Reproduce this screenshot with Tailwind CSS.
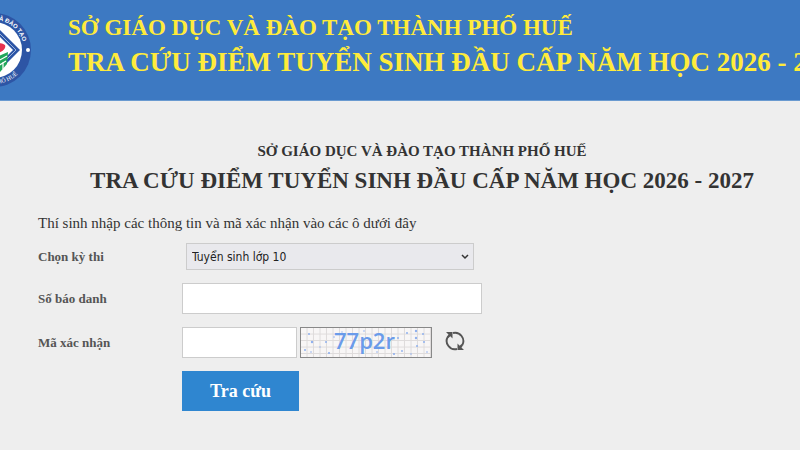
<!DOCTYPE html>
<html lang="vi">
<head>
<meta charset="utf-8">
<meta name="viewport" content="width=device-width, initial-scale=1">
<title>Tra cứu điểm tuyển sinh</title>
<script src="https://cdn.jsdelivr.net/npm/@tailwindcss/browser@4"></script>
</head>
<body class="min-h-screen overflow-x-hidden bg-[#eeeeee] font-['Liberation_Serif',serif] text-[#333333]">
<header class="flex items-center overflow-hidden border-b border-[#6a9ad0] bg-[#3d79c2] pb-3 pt-3">
  <svg class="-ml-[44px] h-[76px] w-[76px] shrink-0" viewBox="-38 -38 76 76" role="img" aria-label="Sở Giáo dục và Đào tạo Huế">
    <defs>
      <path id="top" d="M-30 0A30 30 0 0 1 30 0"/>
      <path id="bottom" d="M-34 0A34 34 0 0 0 34 0"/>
    </defs>
    <circle r="37" fill="#2d55a5"/>
    <circle r="28" fill="#fff"/>
    <path d="M0-26L26 0L0 26L-26 0Z" fill="#2d55a5"/>
    <path d="M0-22L22 0L0 22L-22 0Z" fill="none" stroke="#9db4dc" stroke-width="1"/>
    <path d="M0-19L19 0L0 19L-19 0Z" fill="#fff"/>
    <path d="M2 4Q-9-1-7-5Q-3-9 2-4Q6-9 11-5Q13 0 2 4Z" fill="#e8324f"/>
    <path d="M-12 5L-5 2L0 8L7 5L14 2L13 14L6 22L0 24L-11 14Z" fill="#20a65a"/>
    <path d="M4 11L13 6M4 16L12 11M9 12V19" stroke="#fff" stroke-width="1.2" fill="none"/>
    <circle cx="34" r="2" fill="#fff"/>
    <text font-family="Liberation Sans" font-size="6" font-weight="bold" fill="#fff" text-anchor="middle"><textPath href="#top" startOffset="54%">GIÁO DỤC VÀ ĐÀO TẠO</textPath></text>
    <text font-family="Liberation Serif" font-size="6" fill="#fff" text-anchor="middle"><textPath href="#bottom" startOffset="52%">THÀNH PHỐ HUẾ</textPath></text>
  </svg>
  <div class="ml-9 whitespace-nowrap pb-2 font-bold text-[#ffeb3b]">
    <p class="text-[23px] leading-8">SỞ GIÁO DỤC VÀ ĐÀO TẠO THÀNH PHỐ HUẾ</p>
    <p class="text-[27px] leading-9">TRA CỨU ĐIỂM TUYỂN SINH ĐẦU CẤP NĂM HỌC 2026 - 2027</p>
  </div>
</header>
<main class="px-[38px] pt-9">
  <div class="max-w-[768px] pl-11 text-center font-bold">
    <h2 class="text-[15px] leading-7">SỞ GIÁO DỤC VÀ ĐÀO TẠO THÀNH PHỐ HUẾ</h2>
    <h1 class="whitespace-nowrap text-[23px] leading-8">TRA CỨU ĐIỂM TUYỂN SINH ĐẦU CẤP NĂM HỌC 2026 - 2027</h1>
  </div>
  <p class="mt-4 text-[15px] leading-5">Thí sinh nhập các thông tin và mã xác nhận vào các ô dưới đây</p>
  <form class="mt-[10px] grid grid-cols-[144px_1fr] items-center gap-y-[13px] text-[13px]" onsubmit="return false">
    <label for="exam" class="font-bold text-[#555555]">Chọn kỳ thi</label>
    <div class="relative ml-1 w-72">
      <select id="exam" class="h-[27px] w-full appearance-none border border-[#cccccc] bg-[#e9e9ed] pl-[5px] font-['DejaVu_Sans_Condensed','DejaVu_Sans',sans-serif] text-xs text-[#222222]"><option>Tuyển sinh lớp 10</option></select>
      <svg class="pointer-events-none absolute right-[5px] top-[10px] h-2 w-2" viewBox="0 0 8 8" fill="none" stroke="#333" stroke-width="1.5"><path d="M1 2L4 5L7 2"/></svg>
    </div>
    <label for="number" class="font-bold text-[#555555]">Số báo danh</label>
    <input id="number" type="text" class="h-[31px] w-[300px] border border-[#cccccc] bg-white px-2">
    <label for="code" class="font-bold text-[#555555]">Mã xác nhận</label>
    <div class="flex items-center">
      <input id="code" type="text" class="h-[31px] w-[115px] border border-[#cccccc] bg-white px-2">
      <svg class="ml-[3px] h-[31px] w-[132px] border border-[#888888] bg-[#f8f6f6]" viewBox="0 0 130 29">
        <defs><pattern id="grid" width="6.5" height="6.5" patternUnits="userSpaceOnUse"><path d="M6 0V6.5M0 6H6.5" stroke="#dedbdb" stroke-width="1"/></pattern></defs>
        <rect width="130" height="29" fill="url(#grid)"/>
        <g fill="#8fb0ee">
          <circle cx="8" cy="6" r="1"/><circle cx="11" cy="14" r="1.2"/><circle cx="4" cy="22" r="1"/><circle cx="10" cy="24" r=".8"/><circle cx="19" cy="19" r=".7"/><circle cx="25" cy="14" r="1"/><circle cx="28" cy="25" r="1.1"/><circle cx="33" cy="9" r=".8"/><circle cx="41" cy="4" r=".7"/><circle cx="52" cy="18" r=".9"/><circle cx="63" cy="3" r=".8"/><circle cx="76" cy="24" r=".8"/><circle cx="93" cy="26" r="1.1"/><circle cx="97" cy="10" r="1"/><circle cx="101" cy="23" r=".9"/><circle cx="106" cy="5" r="1"/><circle cx="110" cy="26" r=".8"/><circle cx="115" cy="3" r="1.2"/><circle cx="115" cy="10" r="1.2"/><circle cx="122" cy="6" r="1"/><circle cx="123" cy="14" r="1"/><circle cx="116" cy="18" r="1"/><circle cx="126" cy="24" r=".8"/>
        </g>
        <text x="33" y="21" font-family="Open Sans, sans-serif" font-size="22" font-weight="600" fill="#6a9bea">77p2r</text>
      </svg>
      <button type="button" aria-label="Đổi mã" class="mb-1 ml-3">
        <svg class="h-[22px] w-[22px]" viewBox="0 0 22 22">
          <path d="M9 3A8.300 8.300 0 0 1 18.300 15M13 19A8.300 8.300 0 0 1 4 6.500" fill="none" stroke="#555" stroke-width="1.900"/>
          <path d="M2 2H8.500V8.500L6.300 6.300L4.500 8L3 6.500L4.500 4.500ZM20 20H13.500V13.500L15.700 15.700L17.500 14L19 15.500L17.500 17.500Z" fill="#555"/>
        </svg>
      </button>
    </div>
    <button type="submit" class="col-start-2 h-10 w-[117px] bg-[#2f86d0] text-lg font-bold text-white">Tra cứu</button>
  </form>
</main>
</body>
</html>
